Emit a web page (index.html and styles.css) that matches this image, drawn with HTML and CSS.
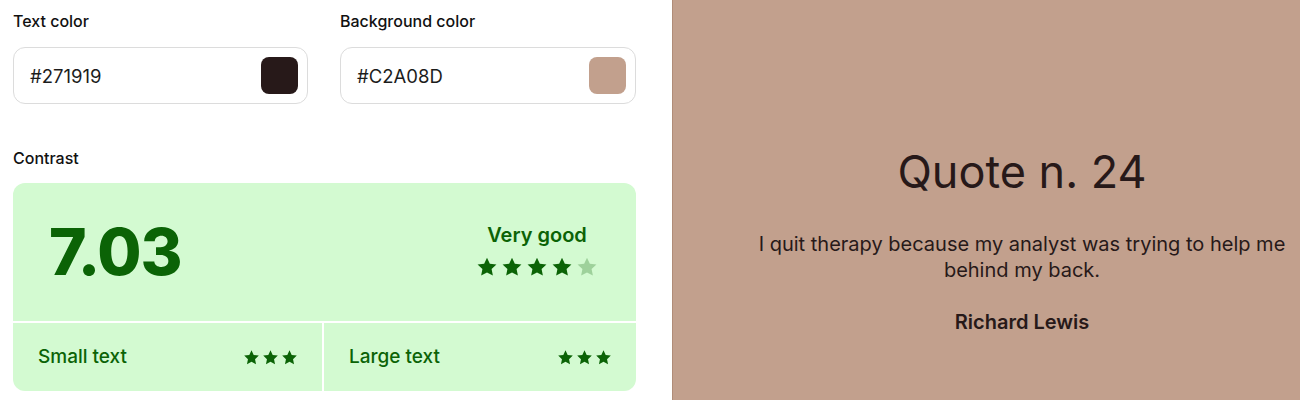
FILE: index.html
```html
<!DOCTYPE html>
<html lang="en">
<head>
<meta charset="utf-8">
<title>Contrast checker</title>
<link rel="stylesheet" href="styles.css">
</head>
<body>
<div class="page">
  <section class="controls">
    <div class="fields">
      <div class="field">
        <div class="label">Text color</div>
        <div class="input">
          <span class="value">#271919</span>
          <span class="swatch swatch-text"></span>
        </div>
      </div>
      <div class="field">
        <div class="label">Background color</div>
        <div class="input">
          <span class="value">#C2A08D</span>
          <span class="swatch swatch-bg"></span>
        </div>
      </div>
    </div>
    <div class="label contrast-label">Contrast</div>
    <div class="card">
      <div class="card-top">
        <div class="ratio">7.03</div>
        <div class="rating">
          <div class="rating-text">Very good</div>
          <div class="stars stars-big">
            <svg viewBox="0 0 24 24"><path d="M12 1.8l3.1 6.6 7.2.9-5.3 5 1.4 7.1L12 17.9l-6.4 3.5L7 14.3l-5.3-5 7.2-.9z"/></svg>
            <svg viewBox="0 0 24 24"><path d="M12 1.8l3.1 6.6 7.2.9-5.3 5 1.4 7.1L12 17.9l-6.4 3.5L7 14.3l-5.3-5 7.2-.9z"/></svg>
            <svg viewBox="0 0 24 24"><path d="M12 1.8l3.1 6.6 7.2.9-5.3 5 1.4 7.1L12 17.9l-6.4 3.5L7 14.3l-5.3-5 7.2-.9z"/></svg>
            <svg viewBox="0 0 24 24"><path d="M12 1.8l3.1 6.6 7.2.9-5.3 5 1.4 7.1L12 17.9l-6.4 3.5L7 14.3l-5.3-5 7.2-.9z"/></svg>
            <svg class="off" viewBox="0 0 24 24"><path d="M12 1.8l3.1 6.6 7.2.9-5.3 5 1.4 7.1L12 17.9l-6.4 3.5L7 14.3l-5.3-5 7.2-.9z"/></svg>
          </div>
        </div>
      </div>
      <div class="card-bottom">
        <div class="cell">
          <span class="cell-text">Small text</span>
          <div class="stars stars-small">
            <svg viewBox="0 0 24 24"><path d="M12 1.8l3.1 6.6 7.2.9-5.3 5 1.4 7.1L12 17.9l-6.4 3.5L7 14.3l-5.3-5 7.2-.9z"/></svg>
            <svg viewBox="0 0 24 24"><path d="M12 1.8l3.1 6.6 7.2.9-5.3 5 1.4 7.1L12 17.9l-6.4 3.5L7 14.3l-5.3-5 7.2-.9z"/></svg>
            <svg viewBox="0 0 24 24"><path d="M12 1.8l3.1 6.6 7.2.9-5.3 5 1.4 7.1L12 17.9l-6.4 3.5L7 14.3l-5.3-5 7.2-.9z"/></svg>
          </div>
        </div>
        <div class="cell">
          <span class="cell-text">Large text</span>
          <div class="stars stars-small">
            <svg viewBox="0 0 24 24"><path d="M12 1.8l3.1 6.6 7.2.9-5.3 5 1.4 7.1L12 17.9l-6.4 3.5L7 14.3l-5.3-5 7.2-.9z"/></svg>
            <svg viewBox="0 0 24 24"><path d="M12 1.8l3.1 6.6 7.2.9-5.3 5 1.4 7.1L12 17.9l-6.4 3.5L7 14.3l-5.3-5 7.2-.9z"/></svg>
            <svg viewBox="0 0 24 24"><path d="M12 1.8l3.1 6.6 7.2.9-5.3 5 1.4 7.1L12 17.9l-6.4 3.5L7 14.3l-5.3-5 7.2-.9z"/></svg>
          </div>
        </div>
      </div>
    </div>
  </section>
  <section class="preview">
    <div class="preview-inner">
      <h1 class="quote-title">Quote n. 24</h1>
      <p class="quote-text">I quit therapy because my analyst was trying to help me behind my back.</p>
      <p class="quote-author">Richard Lewis</p>
    </div>
  </section>
</div>
</body>
</html>
```

FILE: styles.css
```css
* { box-sizing: border-box; }
html, body { margin: 0; padding: 0; }
body {
  font-family: Inter, "Noto Sans", sans-serif;
  background: #ffffff;
  color: #1a1a1a;
  width: 1300px;
  height: 400px;
  overflow: hidden;
}
.page {
  display: flex;
  height: 400px;
}
.controls {
  width: 672px;
  flex-shrink: 0;
  padding: 12px 36px 0 13px;
}
.fields {
  display: grid;
  grid-template-columns: 295px 296px;
  column-gap: 32px;
}
.label {
  font-size: 16px;
  font-weight: 500;
  line-height: 19px;
  color: #111;
}
.input {
  margin-top: 16px;
  height: 57px;
  border: 1px solid #dcdcdc;
  border-radius: 12px;
  display: flex;
  align-items: center;
  justify-content: space-between;
  padding: 0 9px 0 16px;
}
.value {
  font-size: 18.5px;
  color: #1c1c1c;
}
.swatch {
  width: 37px;
  height: 37px;
  border-radius: 8px;
}
.swatch-text { background: #271919; }
.swatch-bg { background: #C2A08D; }
.contrast-label {
  margin-top: 45px;
}
.card {
  margin-top: 15px;
  border-radius: 12px;
  overflow: hidden;
  display: flex;
  flex-direction: column;
  gap: 2px;
  background: #ffffff;
  color: #0b6306;
}
.card-top {
  background: #d3fad1;
  height: 138px;
  display: flex;
  align-items: center;
  justify-content: space-between;
  padding: 0 38px 0 36px;
}
.ratio {
  font-size: 64px;
  font-weight: 800;
  letter-spacing: -1px;
  margin-top: -2px;
}
.rating {
  display: flex;
  flex-direction: column;
  align-items: center;
  margin-top: -3px;
}
.rating-text {
  font-size: 20px;
  font-weight: 600;
  line-height: 24px;
}
.stars {
  display: flex;
}
.stars svg { fill: #0b6306; display: block; }
.stars svg.off { fill: #9ed19b; }
.stars-big { gap: 3px; margin-top: 9px; }
.stars-big svg { width: 22px; height: 22px; }
.card-bottom {
  display: grid;
  grid-template-columns: 309px 1fr;
  gap: 2px;
  height: 68px;
}
.cell {
  background: #d3fad1;
  display: flex;
  align-items: center;
  justify-content: space-between;
  padding: 0 24px 0 25px;
}
.cell-text {
  font-size: 19px;
  font-weight: 500;
  margin-top: -2px;
}
.stars-small { gap: 2px; }
.stars-small svg { width: 17px; height: 17px; }
.preview {
  flex: 1;
  background: #C2A08D;
  border-left: 1px solid #b08c78;
  color: #271919;
  padding: 145px 0 0 70px;
  display: flex;
  align-items: flex-start;
  justify-content: center;
}
.preview-inner {
  width: 558px;
  text-align: center;
}
.quote-title {
  font-size: 45px;
  font-weight: 400;
  margin: 0;
  line-height: 54px;
}
.quote-text {
  font-size: 20px;
  line-height: 26px;
  margin: 32px 0 0;
}
.quote-author {
  font-size: 20px;
  font-weight: 600;
  line-height: 26px;
  margin: 26px 0 0;
}
```
